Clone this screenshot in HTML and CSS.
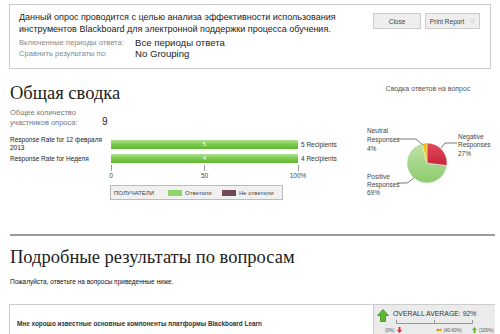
FILE: index.html
```html
<!DOCTYPE html>
<html>
<head>
    <meta charset="utf-8">
    <title>Сводка опроса</title>
    <link rel="stylesheet" href="styles.css">
</head>
<body>
    <!-- header with survey info -->
    <div class="infobox">
        <div class="infotext">
            <p class="intro">Данный опрос проводится с целью анализа эффективности использования инструментов Blackboard для электронной поддержки процесса обучения.</p>
            <div class="inforow first"><span class="infolabel">Включенные периоды ответа:</span><span class="infovalue">Все периоды ответа</span></div>
            <div class="inforow"><span class="infolabel">Сравнить результаты по:</span><span class="infovalue">No Grouping</span></div>
        </div>
        <div class="buttons">
            <span class="btn btnclose">Close</span>
            <span class="btn btnprint">Print Report
                <svg class="chev" width="5" height="6" viewBox="0 0 5 6"><path d="M0.5 0.5 L2.5 2.5 L4.5 0.5 M0.5 3 L2.5 5 L4.5 3" fill="none" stroke="#c8c8c8" stroke-width="0.9"/></svg>
            </span>
        </div>
    </div>

    <!-- summary -->
    <div class="summary">
        <div class="summaryleft">
            <h2 class="title">Общая сводка</h2>
            <div class="countrow">
                <span class="countlabel">Общее количество<br>участников опроса:</span>
                <span class="countvalue">9</span>
            </div>
            <div class="chart">
                <div class="chartlabel">Response Rate for 12 февраля 2013</div>
                <div class="barcell"><div class="bar" style="width:100%">5</div></div>
                <div class="chartcount">5 Recipients</div>
                <div class="chartlabel">Response Rate for Неделя</div>
                <div class="barcell"><div class="bar" style="width:100%">4</div></div>
                <div class="chartcount">4 Recipients</div>
            </div>
            <div class="axis">
                <div class="tick"><span class="tickline"></span><span class="ticktext">0</span></div>
                <div class="tick"><span class="tickline"></span><span class="ticktext">50</span></div>
                <div class="tick"><span class="tickline"></span><span class="ticktext">100%</span></div>
            </div>
            <div class="legend">
                <span class="legendtitle">ПОЛУЧАТЕЛИ</span>
                <span class="swatch swgreen"></span><span class="legendtext">Ответили</span>
                <span class="swatch swred"></span><span class="legendtext">Не ответили</span>
            </div>
        </div>
        <div class="summaryright">
            <div class="pietitle">Сводка ответов на вопрос</div>
            <svg class="pie" width="140" height="80" viewBox="0 0 140 80">
                <defs>
                    <linearGradient id="gg" x1="0" y1="0" x2="0" y2="1">
                        <stop offset="0" stop-color="#bde3a8"/>
                        <stop offset="1" stop-color="#8ccb6c"/>
                    </linearGradient>
                    <linearGradient id="rg" x1="0" y1="0" x2="0" y2="1">
                        <stop offset="0" stop-color="#e24a5c"/>
                        <stop offset="1" stop-color="#c9243b"/>
                    </linearGradient>
                </defs>
                <path d="M72 43 L91.84 45.51 A20 20 0 1 1 67.03 23.63 Z" fill="url(#gg)" stroke="#fff" stroke-width="0.4"/>
                <path d="M72 43 L72 23 A20 20 0 0 1 91.84 45.51 Z" fill="url(#rg)" stroke="#fff" stroke-width="0.4"/>
                <path d="M72 43 L67.03 23.63 A20 20 0 0 1 72 23 Z" fill="#f3c21d" stroke="#fff" stroke-width="0.4"/>
                <polyline points="43,19 61,19 68,25" fill="none" stroke="#555" stroke-width="0.8"/>
                <polyline points="102,23 90,23 86,28" fill="none" stroke="#555" stroke-width="0.8"/>
                <polyline points="42,63 52,63 59,58" fill="none" stroke="#555" stroke-width="0.8"/>
                <g class="pielabel">
                    <text x="12" y="12.5">Neutral</text>
                    <text x="12" y="21.5">Responses</text>
                    <text x="12" y="30.5">4%</text>
                    <text x="103" y="18.5">Negative</text>
                    <text x="103" y="26.5">Responses</text>
                    <text x="103" y="35.5">27%</text>
                    <text x="12" y="58.5">Positive</text>
                    <text x="12" y="66.5">Responses</text>
                    <text x="12" y="74.5">69%</text>
                </g>
            </svg>
        </div>
    </div>

    <hr class="divider">

    <h2 class="title title2">Подробные результаты по вопросам</h2>
    <p class="note">Пожалуйста, ответьте на вопросы приведенные ниже.</p>

    <div class="question">
        <div class="qtext">Мне хорошо известные основные компоненты платформы Blackboard Learn</div>
        <div class="avgbox">
            <div class="avgtop">
                <svg width="12" height="13" viewBox="0 0 12 13"><polygon points="6,0.5 11.5,6.5 8.5,6.5 8.5,12.5 3.5,12.5 3.5,6.5 0.5,6.5" fill="#5cbb2c" stroke="#3f8f1c" stroke-width="0.8"/></svg>
                <div class="avgmain">
                    <div class="avgtitle">OVERALL AVERAGE: 92%</div>
                    <div class="scale"><span></span><span></span><span></span></div>
                </div>
            </div>
            <div class="avgkey">
                <span class="keygroup">(0%) <svg width="5" height="6" viewBox="0 0 5 6"><polygon points="1.5,0 3.5,0 3.5,3 5,3 2.5,6 0,3 1.5,3" fill="#e0262e"/></svg></span>
                <span class="keygroup kmid"><svg width="6" height="4" viewBox="0 0 6 4"><polygon points="0,2 2,0 2,1 4,1 4,0 6,2 4,4 4,3 2,3 2,4" fill="#e2a21a"/></svg> (40-60%)</span>
                <span class="keygroup kend"><svg width="5" height="6" viewBox="0 0 5 6"><polygon points="2.5,0 5,3 3.5,3 3.5,6 1.5,6 1.5,3 0,3" fill="#5cbb2c"/></svg> (100%)</span>
            </div>
        </div>
    </div>
</body>
</html>
```

FILE: styles.css
```css
* {
    box-sizing: border-box;
}

body {
    margin: 0;
    padding: 4px 5px 0 9px;
    font-family: "Liberation Sans", Arial, sans-serif;
    color: #333;
    background: #fff;
    overflow: hidden;
}

/* header */
.infobox {
    display: flex;
    justify-content: space-between;
    border: 1px solid #ccc;
    width: 482px;
    padding: 6px 0 9px 9px;
}

.intro {
    margin: 0;
    width: 345px;
    font-size: 9px;
    line-height: 12px;
    color: #222;
}

.inforow {
    display: flex;
    line-height: 11px;
}

.inforow.first {
    margin-top: 2px;
}

.infolabel {
    width: 116px;
    font-size: 7.6px;
    color: #888;
}

.infovalue {
    font-size: 9.6px;
    color: #222;
}

.buttons {
    display: flex;
    flex-shrink: 0;
    gap: 4px;
    align-items: flex-start;
    padding: 2px 10px 0 0;
}

.btn {
    display: flex;
    align-items: center;
    justify-content: center;
    height: 16px;
    background: #eee;
    border: 1px solid #ccc;
    font-size: 6.5px;
    color: #444;
}

.btnclose {
    width: 48px;
}

.btnprint {
    width: 55px;
    gap: 6px;
}

/* summary */
.summary {
    display: flex;
}

.summaryleft {
    width: 351px;
}

.title {
    margin: 13px 0 0 1px;
    font-family: "Liberation Serif", "Times New Roman", serif;
    font-weight: normal;
    font-size: 18.5px;
    line-height: 22px;
    color: #222;
}

.countrow {
    display: flex;
    align-items: flex-end;
    margin: 4px 0 0 1px;
}

.countlabel {
    width: 92px;
    font-size: 7.5px;
    line-height: 10px;
    color: #777;
}

.countvalue {
    font-size: 10px;
    line-height: 12px;
    color: #222;
}

.chart {
    display: grid;
    grid-template-columns: 101px 187px auto;
    grid-template-rows: 16px 13px;
    align-items: center;
    margin: 8px 0 0 1px;
}

.chartlabel {
    width: 92px;
    font-size: 6.5px;
    line-height: 8px;
    color: #222;
}

.barcell {
    height: 9px;
}

.bar {
    height: 9px;
    background: linear-gradient(#b2e194, #7ccb4f 45%, #63b634);
    color: #fff;
    font-size: 6px;
    line-height: 9px;
    text-align: center;
}

.chartcount {
    padding-left: 3px;
    font-size: 6.5px;
    color: #333;
}

.axis {
    display: flex;
    justify-content: space-between;
    width: 187px;
    margin-left: 102px;
}

.tick {
    display: flex;
    flex-direction: column;
    align-items: center;
    width: 0;
}

.tickline {
    width: 1px;
    height: 6px;
    background: #999;
}

.ticktext {
    font-size: 6.5px;
    line-height: 9px;
    color: #444;
}

.legend {
    display: flex;
    align-items: center;
    width: 173px;
    height: 15px;
    margin: 5px 0 0 101px;
    padding-left: 3px;
    background: #f0f0f0;
    border: 1px solid #bbb;
    font-size: 6px;
    color: #444;
}

.legendtitle {
    width: 54px;
}

.swatch {
    width: 14px;
    height: 6px;
    margin-right: 3px;
}

.swgreen {
    background: #8fd56a;
}

.swred {
    background: #6e4a55;
}

.legendtext {
    width: 37px;
}

.summaryright {
    width: 140px;
}

.pietitle {
    margin-top: 15px;
    padding-left: 6px;
    text-align: center;
    font-size: 7px;
    line-height: 10px;
    color: #555;
}

.pie {
    display: block;
    margin-top: 26px;
}

.pielabel {
    font-family: "Liberation Sans", Arial, sans-serif;
    font-size: 6.5px;
    fill: #444;
}

.divider {
    margin: 34px 0 0 1px;
    width: 485px;
    height: 2px;
    border: 0;
    background: #9a9a9a;
}

.title2 {
    margin-top: 9px;
    line-height: 24px;
}

.note {
    margin: 8px 0 0 1px;
    font-size: 6.5px;
    line-height: 10px;
    color: #111;
}

/* question */
.question {
    display: flex;
    margin-top: 17px;
    width: 486px;
    height: 40px;
    border-top: 1px solid #ccc;
    border-left: 1px solid #ccc;
}

.qtext {
    flex: 1;
    padding: 14px 0 0 7px;
    font-size: 6.4px;
    line-height: 10px;
    font-weight: bold;
    color: #333;
}

.avgbox {
    width: 122px;
    flex-shrink: 0;
    background: #ebebeb;
    border-left: 1px solid #ccc;
    padding: 4px 0 0 3px;
}

.avgtop {
    display: flex;
    gap: 4px;
}

.avgtitle {
    font-size: 6.9px;
    line-height: 9px;
    color: #333;
    white-space: nowrap;
}

.scale {
    display: flex;
    justify-content: space-between;
    width: 77px;
    height: 4px;
    margin: 2px 0 0 3px;
    border-bottom: 1px solid #999;
}

.scale span {
    width: 1px;
    background: #999;
}

.avgkey {
    display: flex;
    align-items: center;
    margin: 3px 0 0 8px;
    font-size: 4.5px;
    color: #555;
    white-space: nowrap;
}

.keygroup {
    display: flex;
    flex-shrink: 0;
    align-items: center;
    gap: 2px;
}

.kmid {
    margin-left: 34px;
}

.kend {
    margin-left: 10px;
}
```
